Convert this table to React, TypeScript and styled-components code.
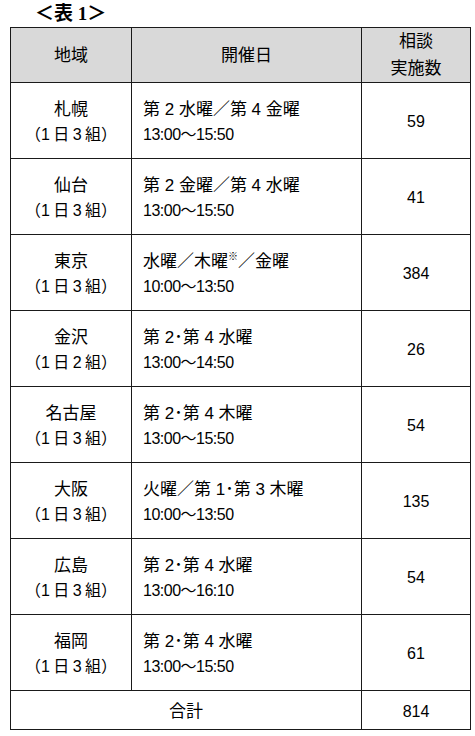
import styled, { createGlobalStyle } from 'styled-components';

const GlobalStyle = createGlobalStyle`
  html, body {
    margin: 0;
    padding: 0;
    background: #ffffff;
  }
  body {
    font-family: "Liberation Sans", "Noto Sans CJK JP", sans-serif;
    color: #000;
  }
`;

const Page = styled.div`
  width: 475px;
  padding: 0 0 0 10px;
  box-sizing: border-box;
`;

const Caption = styled.div`
  height: 27px;
  padding-left: 25px;
  font-family: "Liberation Serif", "Noto Sans CJK JP", serif;
  font-size: 19px;
  line-height: 27px;
  font-weight: 700;
`;

const Table = styled.table`
  border-collapse: collapse;
  width: 458px;
  table-layout: fixed;
  font-size: 17px;
`;

const HeadCell = styled.th<{ $w: number }>`
  width: ${(p) => p.$w}px;
  height: 54px;
  padding: 0;
  background: #d9d9d9;
  border: 1px solid #1a1a1a;
  font-weight: 400;
  line-height: 27px;
  text-align: center;
  vertical-align: middle;
`;

const Row = styled.tr<{ $h: number }>`
  height: ${(p) => p.$h}px;
`;

const Cell = styled.td<{ $align?: 'left' | 'center' }>`
  padding: 2px 0 0 ${(p) => (p.$align === 'left' ? '11px' : '0')};
  border: 1px solid #1a1a1a;
  text-align: ${(p) => p.$align ?? 'center'};
  vertical-align: middle;
  line-height: 25px;
`;

const Line = styled.div<{ $size?: number; $track?: number; $word?: number }>`
  font-size: ${(p) => p.$size ?? 17}px;
  letter-spacing: ${(p) => p.$track ?? 0}px;
  word-spacing: ${(p) => p.$word ?? 0}px;
  white-space: nowrap;
`;

const Count = styled.span`
  font-size: 16px;
`;

const Note = styled.sup`
  font-size: 10px;
  line-height: 0;
  vertical-align: 7px;
`;

type Venue = {
  city: string;
  groups: string;
  days: React.ReactNode;
  hours: string;
  count: number;
};

const venues: Venue[] = [
  { city: '札幌', groups: '（1 日 3 組）', days: '第 2 水曜／第 4 金曜', hours: '13:00～15:50', count: 59 },
  { city: '仙台', groups: '（1 日 3 組）', days: '第 2 金曜／第 4 水曜', hours: '13:00～15:50', count: 41 },
  {
    city: '東京',
    groups: '（1 日 3 組）',
    days: (
      <>
        水曜／木曜<Note>※</Note>／金曜
      </>
    ),
    hours: '10:00～13:50',
    count: 384,
  },
  { city: '金沢', groups: '（1 日 2 組）', days: '第 2･第 4 水曜', hours: '13:00～14:50', count: 26 },
  { city: '名古屋', groups: '（1 日 3 組）', days: '第 2･第 4 木曜', hours: '13:00～15:50', count: 54 },
  { city: '大阪', groups: '（1 日 3 組）', days: '火曜／第 1･第 3 木曜', hours: '10:00～13:50', count: 135 },
  { city: '広島', groups: '（1 日 3 組）', days: '第 2･第 4 水曜', hours: '13:00～16:10', count: 54 },
  { city: '福岡', groups: '（1 日 3 組）', days: '第 2･第 4 水曜', hours: '13:00～15:50', count: 61 },
];

const App = () => {
  const total = venues.reduce((sum, v) => sum + v.count, 0);

  return (
    <Page>
      <GlobalStyle />
      <Caption>＜表 1＞</Caption>
      <Table>
        <thead>
          <tr>
            <HeadCell $w={120}>地域</HeadCell>
            <HeadCell $w={229}>開催日</HeadCell>
            <HeadCell $w={108}>
              相談
              <br />
              実施数
            </HeadCell>
          </tr>
        </thead>
        <tbody>
          {venues.map((v) => (
            <Row $h={76} key={v.city}>
              <Cell>
                <Line>{v.city}</Line>
                <Line $size={16} $word={-1}>
                  {v.groups}
                </Line>
              </Cell>
              <Cell $align="left">
                <Line>{v.days}</Line>
                <Line $size={16} $track={-0.5}>
                  {v.hours}
                </Line>
              </Cell>
              <Cell>
                <Count>{v.count}</Count>
              </Cell>
            </Row>
          ))}
          <Row $h={39}>
            <Cell colSpan={2}>合計</Cell>
            <Cell>
              <Count>{total}</Count>
            </Cell>
          </Row>
        </tbody>
      </Table>
    </Page>
  );
};

export default App;
